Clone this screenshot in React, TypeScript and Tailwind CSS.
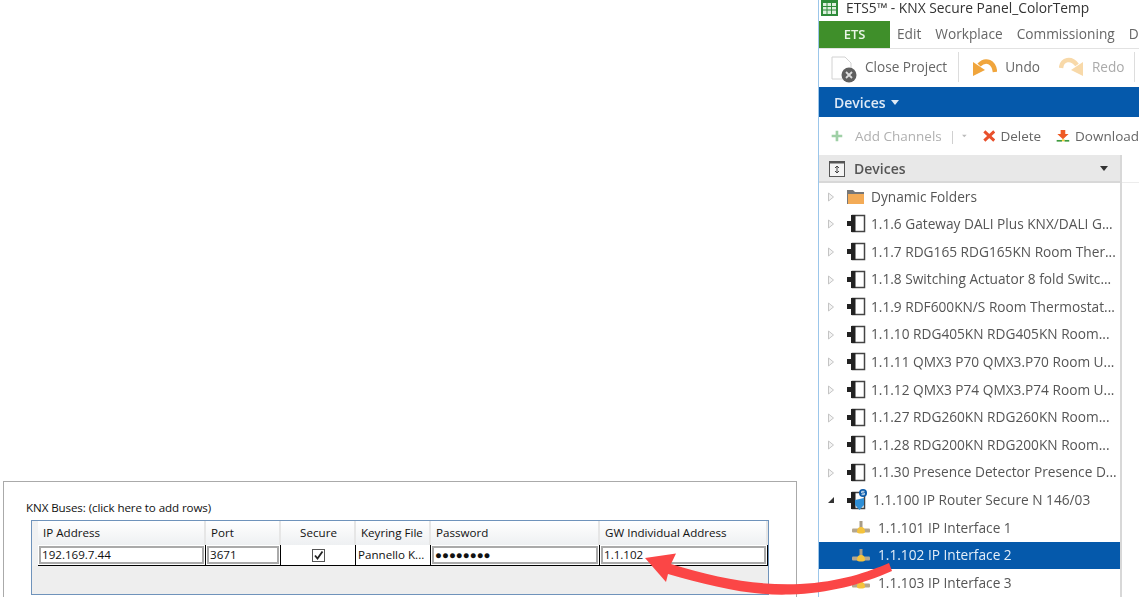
import React from "react";

const ui = { fontFamily: '"Open Sans", "Noto Sans", sans-serif' };

function DeviceIcon() {
  return (
    <svg width="20" height="20" viewBox="0 0 20 20" className="shrink-0">
      <rect x="6.5" y="1.5" width="12" height="16" fill="#fff" stroke="#444" strokeWidth="1.5" />
      <rect x="5" y="1" width="4.5" height="17" fill="#222" />
      <rect x="1" y="7" width="5" height="5" fill="#222" />
    </svg>
  );
}

function SecureIcon() {
  return (
    <svg width="22" height="22" viewBox="0 0 22 22" className="shrink-0">
      <rect x="6.5" y="3.5" width="12" height="16" fill="#fff" stroke="#444" strokeWidth="1.5" />
      <rect x="5" y="3" width="4.5" height="17" fill="#222" />
      <rect x="1" y="9" width="5" height="5" fill="#222" />
      <path d="M9 11 L18 9 L18 16 L13.5 21 L9 16 Z" fill="#2f8fd6" />
      <circle cx="17" cy="4" r="4" fill="#0b5cab" />
      <path d="M18.5 2.3 H15.7 V4 H18.3 V5.7 H15.5" fill="none" stroke="#fff" strokeWidth="0.8" />
    </svg>
  );
}

function InterfaceIcon() {
  return (
    <svg width="18" height="16" viewBox="0 0 18 16" className="shrink-0">
      <rect x="0" y="8.5" width="18" height="4" rx="1" fill="#b5a78e" />
      <rect x="7.5" y="1" width="3" height="8" fill="#a89c86" />
      <path d="M5 12 C5 8 7 7 9 7 C11 7 13 8 13 12 C13 14 5 14 5 12 Z" fill="#f5c33c" />
    </svg>
  );
}

function Caret({ open }: { open?: boolean }) {
  return (
    <svg width="8" height="10" viewBox="0 0 8 10" className="shrink-0">
      {open ? (
        <path d="M7 2 V8 H1 Z" fill="#333" />
      ) : (
        <path d="M1.5 1 L6.5 5 L1.5 9 Z" fill="#f4f4f4" stroke="#c4c4c4" />
      )}
    </svg>
  );
}

function Row({ label, icon, open, noCaret, selected, indent }: { label: string; icon: React.ReactNode; open?: boolean; noCaret?: boolean; selected?: boolean; indent?: boolean }) {
  return (
    <div className={`flex h-[27.6px] shrink-0 items-center text-[13.7px] whitespace-nowrap ${selected ? "bg-[#0559ab] text-[#e4eef8]" : "text-[#555]"}`}>
      <div className="ml-[8px] flex w-[8px] shrink-0">{!noCaret && <Caret open={open} />}</div>
      <div className={`flex items-center ${indent ? "ml-[17px] gap-[8px]" : "ml-[11px] gap-[5px]"}`}>
        {icon}
        <span>{label}</span>
      </div>
    </div>
  );
}

const devices = [
  "1.1.6 Gateway DALI Plus KNX/DALI G...",
  "1.1.7 RDG165 RDG165KN Room Ther...",
  "1.1.8 Switching Actuator 8 fold Switc...",
  "1.1.9 RDF600KN/S Room Thermostat...",
  "1.1.10 RDG405KN RDG405KN Room...",
  "1.1.11 QMX3 P70 QMX3.P70 Room U...",
  "1.1.12 QMX3 P74 QMX3.P74 Room U...",
  "1.1.27 RDG260KN RDG260KN Room...",
  "1.1.28 RDG200KN RDG200KN Room...",
  "1.1.30 Presence Detector Presence D...",
];

function HeaderCell({ w, children, center }: { w: string; children: React.ReactNode; center?: boolean }) {
  return (
    <div className={`${w} flex h-full shrink-0 items-center border-r-2 border-[#e6e6e6] bg-gradient-to-b from-white to-[#eef0f2] ${center ? "justify-center pl-[2px]" : "pl-[5px]"}`}>
      {children}
    </div>
  );
}

function Cell({ w, children, box }: { w: string; children?: React.ReactNode; box?: boolean }) {
  return (
    <div className={`${w} flex h-full shrink-0 items-center border-r border-black ${box ? "p-[1px]" : ""}`}>
      {box ? (
        <div className="flex h-full w-full items-center border-2 border-[#aaa] pl-[1px]">{children}</div>
      ) : (
        children
      )}
    </div>
  );
}

export default function App() {
  return (
    <div className="relative flex h-[597px] w-[1145px] overflow-hidden bg-white">
      <div className="flex h-full w-[818px] shrink-0 flex-col justify-end pl-[3px] pr-[21px]">
        <div className="flex h-[116px] flex-col border-x border-t border-[#aaa] pl-[23px] pr-[27px] text-[11.6px] text-[#111]" style={{ fontFamily: '"Open Sans", sans-serif' }}>
          <div className="mt-[17px] ml-[-1px] h-[21px] leading-[18px] tracking-[-0.1px]">KNX Buses: (click here to add rows)</div>
          <div className="ml-[4px] flex h-[75px] flex-col border border-[#6f93bb] bg-[#eeeeee]">
            <div className="flex h-[24px] shrink-0 bg-white">
              <div className="h-full w-[6px] shrink-0 bg-[#f0f1f2]" />
              <HeaderCell w="w-[168px]">IP Address</HeaderCell>
              <HeaderCell w="w-[75px]">Port</HeaderCell>
              <HeaderCell w="w-[75px]" center>Secure</HeaderCell>
              <HeaderCell w="w-[75px]">Keyring File</HeaderCell>
              <HeaderCell w="w-[169px]">Password</HeaderCell>
              <HeaderCell w="w-[168px]">GW Individual Address</HeaderCell>
            </div>
            <div className="flex h-[21px] shrink-0 bg-white">
              <div className="h-full w-[6px] shrink-0 bg-[#f0f1f2]" />
              <div className="flex h-full flex-1 border-b border-black">
                <Cell w="w-[168px]" box>192.169.7.44</Cell>
                <Cell w="w-[75px]" box>3671</Cell>
                <Cell w="w-[75px]">
                  <div className="mx-auto flex h-[13px] w-[13px] items-center justify-center border border-[#555] bg-white">
                    <svg width="11" height="11" viewBox="0 0 11 11"><path d="M2 5.5 L4.5 8.5 L9.5 1.5" fill="none" stroke="#222" strokeWidth="1.8" /></svg>
                  </div>
                </Cell>
                <Cell w="w-[75px]"><span className="pl-[2px] whitespace-nowrap">Pannello K...</span></Cell>
                <Cell w="w-[169px]" box><span className="text-[11.5px]">●●●●●●●●</span></Cell>
                <Cell w="w-[168px]" box>1.1.102</Cell>
              </div>
            </div>
          </div>
        </div>
      </div>

      <div className="flex h-full w-[321px] shrink-0 flex-col overflow-hidden border-l border-[#9cc6ea] blur-[0.45px]" style={ui}>
        <div className="flex h-[21px] shrink-0 items-start gap-[8px] pl-[2px] text-[13.8px] leading-[16px] whitespace-nowrap text-[#333]">
          <svg width="17" height="16" viewBox="0 0 17 16">
            <rect width="17" height="16" fill="#2e8b3a" />
            <rect x="2" y="3" width="13" height="11" fill="#dff0e0" />
            <path d="M6 3 V14 M10.5 3 V14 M2 6.5 H15 M2 10 H15" stroke="#2e8b3a" />
          </svg>
          <span>ETS5™ - KNX Secure Panel_ColorTemp</span>
        </div>
        <div className="flex h-[27px] shrink-0 items-center whitespace-nowrap text-[13.7px] text-[#666]">
          <div className="flex h-full w-[71px] shrink-0 items-center justify-center bg-[#3f8f2a] text-[13px] font-semibold text-[#eaf5e6]">ETS</div>
          <div className="ml-[7px] flex gap-[14px]">
            <span>Edit</span>
            <span>Workplace</span>
            <span>Commissioning</span>
            <span>Diagnostics</span>
          </div>
        </div>
        <div className="flex h-[39px] shrink-0 items-center whitespace-nowrap border-t border-[#e2e2e2] pb-[2px] text-[13.6px] text-[#666]">
          <div className="ml-[11px] flex items-center gap-[3px]">
            <svg width="32" height="28" viewBox="0 0 32 28" className="mt-[4px]">
              <path d="M2 2 H15 L21 8 V24 H2 Z" fill="#fff" stroke="#d2d2d2" />
              <circle cx="19" cy="20" r="7.5" fill="#5f5f5f" />
              <path d="M16 17 L22 23 M22 17 L16 23" stroke="#ddd" strokeWidth="1.8" />
            </svg>
            <span>Close Project</span>
          </div>
          <div className="ml-[11px] h-[30px] w-px bg-[#ddd]" />
          <div className="ml-[13px] flex items-center gap-[8px]">
            <svg width="25" height="22" viewBox="0 0 25 22">
              <path d="M23 16 C22 6 14 2 7 9" fill="none" stroke="#f0a53c" strokeWidth="4.5" />
              <path d="M1 6 L13 14 L1 20 Z" fill="#f0a53c" />
            </svg>
            <span>Undo</span>
          </div>
          <div className="ml-[19px] flex items-center gap-[8px] text-[#aaa]">
            <svg width="25" height="22" viewBox="0 0 25 22">
              <path d="M2 12 C3 3 12 1 18 9" fill="none" stroke="#f8d9a9" strokeWidth="4.5" />
              <path d="M24 6 L12 14 L24 20 Z" fill="#f8d9a9" />
            </svg>
            <span>Redo</span>
          </div>
          <div className="ml-[10px] h-[30px] w-px bg-[#ddd]" />
        </div>
        <div className="flex h-[30px] shrink-0 items-center gap-[5px] bg-[#0559ab] pl-[15px] text-[14px] font-semibold text-[#dfeaf6]">
          <span>Devices</span>
          <svg width="8" height="5" viewBox="0 0 8 5"><path d="M0 0 H8 L4 5 Z" fill="#dfeaf6" /></svg>
        </div>
        <div className="flex h-[38px] shrink-0 items-center whitespace-nowrap text-[13.5px] text-[#666]">
          <svg className="ml-[12px]" width="18" height="18" viewBox="0 0 18 18"><path d="M7 1 H11 V7 H17 V11 H11 V17 H7 V11 H1 V7 H7 Z" fill="#9fd0a6" /></svg>
          <span className="ml-[12px] text-[#b0b0b0]">Add Channels</span>
          <span className="ml-[7px] text-[#ccc]">|</span>
          <svg className="ml-[6px]" width="7" height="4" viewBox="0 0 7 4"><path d="M0 0 H7 L3.5 4 Z" fill="#bbb" /></svg>
          <svg className="ml-[16px]" width="19" height="18" viewBox="0 0 19 18"><path d="M2 2 L17 16 M17 2 L2 16" stroke="#e8502c" strokeWidth="4.5" /></svg>
          <span className="ml-[5px]">Delete</span>
          <svg className="ml-[15px]" width="21" height="20" viewBox="0 0 21 20">
            <path d="M7 1 H14 V7 H19 L10.5 15 L2 7 H7 Z" fill="#ee5a24" />
            <rect x="1" y="16" width="8" height="2.5" fill="#3f9a3f" />
            <rect x="9" y="15" width="4" height="3" fill="#f5d33c" />
            <rect x="13" y="16" width="7" height="2.5" fill="#3f9a3f" />
          </svg>
          <span className="ml-[5px]">Download</span>
        </div>
        <div className="flex min-h-0 flex-1">
          <div className="flex w-[303px] shrink-0 flex-col border-r-2 border-[#d8d8d8]">
            <div className="flex h-[28px] shrink-0 items-center border-b-2 border-[#d8d8d8] bg-[#e8e8e8] pl-[10px] pr-[12px] text-[14px] font-semibold text-[#555]">
              <svg width="16" height="17" viewBox="0 0 16 17">
                <rect x="0.5" y="1.5" width="15" height="15" fill="#f4f4f4" stroke="#555" />
                <rect x="0.5" y="1" width="15" height="2.5" fill="#555" />
                <path d="M8 6 V13 M6 8 L8 6 L10 8 M6 11 L8 13 L10 11" fill="none" stroke="#444" />
              </svg>
              <span className="ml-[9px] flex-1">Devices</span>
              <svg width="8" height="5" viewBox="0 0 8 5"><path d="M0 0 H8 L4 5 Z" fill="#333" /></svg>
            </div>
            <Row
              label="Dynamic Folders"
              icon={
                <svg width="19" height="17" viewBox="0 0 19 17" className="mr-[1px] shrink-0">
                  <path d="M1 2 H7 L9 4 H18 V16 H1 Z" fill="#777" />
                  <path d="M2 6 H18 V16 H2 Z" fill="#f3ab57" />
                </svg>
              }
            />
            {devices.map((d) => (
              <Row key={d} label={d} icon={<DeviceIcon />} />
            ))}
            <Row label="1.1.100 IP Router Secure N 146/03" icon={<SecureIcon />} open />
            <Row label="1.1.101 IP Interface 1" icon={<InterfaceIcon />} noCaret indent />
            <Row label="1.1.102 IP Interface 2" icon={<InterfaceIcon />} noCaret indent selected />
            <Row label="1.1.103 IP Interface 3" icon={<InterfaceIcon />} noCaret indent />
          </div>
          <div className="flex-1">
            <div className="h-[28px] border-b border-[#ececec]" />
          </div>
        </div>
      </div>

      <div className="w-[6px] shrink-0" />

      <svg className="pointer-events-none absolute left-0 top-0" width="1145" height="597" viewBox="0 0 1145 597">
        <path
          d="M645 558 L676 553.5 L671 564 C715 578 760 586 800 584 C840 582 868 572 889 563 L892 571 C860 585 830 593 790 594.5 C750 596 710 586 668 574 L666 582 Z"
          fill="#fb4646"
        />
      </svg>
    </div>
  );
}
